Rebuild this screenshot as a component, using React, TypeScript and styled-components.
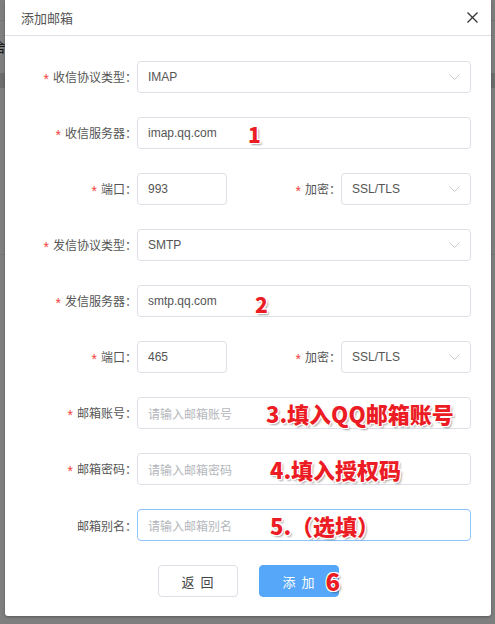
import React, { FC } from 'react'
import styled, { createGlobalStyle } from 'styled-components'

const GlobalStyle = createGlobalStyle`
    html, body {
        margin: 0;
        padding: 0;
        width: 495px;
        height: 624px;
        overflow: hidden;
        font-family: "Liberation Sans", "Noto Sans CJK SC", sans-serif;
    }
`

const Page = styled.div`
    position: relative;
    width: 495px;
    height: 624px;
    background: #fff;
    overflow: hidden;
`

const PageTopBar = styled.div`
    height: 20px;
    border-bottom: 1px solid #e8e8e8;
`

const PageText = styled.div`
    height: 52px;
    font-size: 14px;
    line-height: 52px;
    margin-left: -8px;
    color: #333;
`

const PageBand = styled.div`
    height: 15px;
    background: #dcdcdc;
`

const PageSection = styled.div`
    height: 166px;
    border-bottom: 1px solid #ececec;
`

const Mask = styled.div`
    position: absolute;
    inset: 0;
    background: rgba(0, 0, 0, 0.5);
`

const Dialog = styled.div`
    position: absolute;
    left: 5px;
    top: 0;
    width: 486px;
    height: 616px;
    background: #fff;
    border-radius: 0 0 3px 3px;
    box-shadow: 0 1px 3px rgba(0, 0, 0, 0.3);
    box-sizing: border-box;
`

const Header = styled.div`
    display: flex;
    align-items: center;
    justify-content: space-between;
    height: 36px;
    padding: 0 12px 0 16px;
    border-bottom: 1px solid #dcdfe6;
    box-sizing: border-box;
`

const Title = styled.span`
    font-size: 13px;
    color: #555;
    font-family: "Noto Sans CJK SC", sans-serif;
`

const Close = styled.button`
    border: none;
    background: none;
    padding: 0;
    width: 14px;
    height: 14px;
    display: flex;
    align-items: center;
    justify-content: center;
    cursor: pointer;
`

const Body = styled.div`
    display: flex;
    flex-direction: column;
    gap: 24px;
    padding: 25px 20px 0 12px;
`

const Row = styled.div`
    display: flex;
    align-items: center;
    height: 32px;
`

const Label = styled.label<{ $width: number }>`
    width: ${p => p.$width}px;
    flex-shrink: 0;
    text-align: right;
    font-size: 12px;
    color: #555;
    font-family: "Noto Sans CJK SC", sans-serif;
    white-space: nowrap;
`

const Star = styled.span`
    color: #f03c3c;
    margin-right: 4px;
    font-size: 14px;
    font-family: "Liberation Sans", sans-serif;
    vertical-align: -2px;
`

const Field = styled.div<{ $width?: number; $focus?: boolean }>`
    position: relative;
    display: flex;
    align-items: center;
    box-sizing: border-box;
    height: 32px;
    width: ${p => (p.$width ? `${p.$width}px` : 'auto')};
    flex: ${p => (p.$width ? '0 0 auto' : '1')};
    border: 1px solid ${p => (p.$focus ? '#8cc4fb' : '#dcdfe6')};
    border-radius: 4px;
    padding: 0 10px;
    background: #fff;
`

const Value = styled.span<{ $placeholder?: boolean }>`
    flex: 1;
    font-size: 12px;
    color: ${p => (p.$placeholder ? '#b4b6bb' : '#555')};
    font-family: "Liberation Sans", "Noto Sans CJK SC", sans-serif;
    white-space: nowrap;
`

const Spacer = styled.div`
    flex: 1;
`

const Note = styled.span<{ $left: number; $top?: number; $size?: number }>`
    position: absolute;
    left: ${p => p.$left}px;
    top: ${p => p.$top ?? 0}px;
    font-size: ${p => p.$size ?? 22}px;
    line-height: 30px;
    font-weight: 900;
    color: #ec1c24;
    font-family: "Noto Sans CJK SC", sans-serif;
    white-space: nowrap;
    letter-spacing: 0;
    text-indent: 0;
    text-shadow: 1px 1px 0 #fff, -1px -1px 0 #fff, 1px -1px 0 #fff, -1px 1px 0 #fff,
        0 1px 0 #fff, 1px 0 0 #fff, 2px 2px 2px rgba(0, 0, 0, 0.35);
    pointer-events: none;
`

const Footer = styled.div`
    display: flex;
    justify-content: center;
    gap: 21px;
    padding: 24px 0 0 0;
`

const Button = styled.button<{ $primary?: boolean }>`
    position: relative;
    width: 80px;
    height: 32px;
    border-radius: 4px;
    border: 1px solid ${p => (p.$primary ? '#56a7f9' : '#dcdfe6')};
    background: ${p => (p.$primary ? '#56a7f9' : '#fff')};
    color: ${p => (p.$primary ? '#fff' : '#444')};
    font-size: 13px;
    letter-spacing: 6px;
    text-indent: 6px;
    font-family: "Noto Sans CJK SC", sans-serif;
    cursor: pointer;
    padding: 0;
`

const Arrow: FC = () => (
    <svg width="11" height="6" viewBox="0 0 11 6">
        <path d="M0.5 0.5 L5.5 5.5 L10.5 0.5" fill="none" stroke="#c8cbd1" strokeWidth="1" />
    </svg>
)

const Select: FC<{ value: string; width?: number }> = ({ value, width }) => (
    <Field $width={width}>
        <Value>{value}</Value>
        <Arrow />
    </Field>
)

const App: FC = () => {
    return (
        <>
            <GlobalStyle />
            <Page>
                <PageTopBar />
                <PageText>舍</PageText>
                <PageBand />
                <PageSection />
                <Mask />
                <Dialog>
                    <Header>
                        <Title>添加邮箱</Title>
                        <Close>
                            <svg width="11" height="11" viewBox="0 0 11 11">
                                <path d="M0.5 0.5 L10.5 10.5 M10.5 0.5 L0.5 10.5" stroke="#333" strokeWidth="1.3" />
                            </svg>
                        </Close>
                    </Header>
                    <Body>
                        <Row>
                            <Label $width={120}><Star>*</Star>收信协议类型：</Label>
                            <Select value="IMAP" />
                        </Row>
                        <Row>
                            <Label $width={120}><Star>*</Star>收信服务器：</Label>
                            <Field>
                                <Value>imap.qq.com</Value>
                                <Note $left={110} $top={1} $size={21}>1</Note>
                            </Field>
                        </Row>
                        <Row>
                            <Label $width={120}><Star>*</Star>端口：</Label>
                            <Field $width={90}>
                                <Value>993</Value>
                            </Field>
                            <Spacer />
                            <Label $width={114}><Star>*</Star>加密：</Label>
                            <Select value="SSL/TLS" width={130} />
                        </Row>
                        <Row>
                            <Label $width={120}><Star>*</Star>发信协议类型：</Label>
                            <Select value="SMTP" />
                        </Row>
                        <Row>
                            <Label $width={120}><Star>*</Star>发信服务器：</Label>
                            <Field>
                                <Value>smtp.qq.com</Value>
                                <Note $left={117} $top={3} $size={21}>2</Note>
                            </Field>
                        </Row>
                        <Row>
                            <Label $width={120}><Star>*</Star>端口：</Label>
                            <Field $width={90}>
                                <Value>465</Value>
                            </Field>
                            <Spacer />
                            <Label $width={114}><Star>*</Star>加密：</Label>
                            <Select value="SSL/TLS" width={130} />
                        </Row>
                        <Row>
                            <Label $width={120}><Star>*</Star>邮箱账号：</Label>
                            <Field>
                                <Value $placeholder>请输入邮箱账号</Value>
                                <Note $left={128}>3.填入QQ邮箱账号</Note>
                            </Field>
                        </Row>
                        <Row>
                            <Label $width={120}><Star>*</Star>邮箱密码：</Label>
                            <Field>
                                <Value $placeholder>请输入邮箱密码</Value>
                                <Note $left={132}>4.填入授权码</Note>
                            </Field>
                        </Row>
                        <Row>
                            <Label $width={120}>邮箱别名：</Label>
                            <Field $focus>
                                <Value $placeholder>请输入邮箱别名</Value>
                                <Note $left={132}>5.（选填）</Note>
                            </Field>
                        </Row>
                    </Body>
                    <Footer>
                        <Button>返回</Button>
                        <Button $primary>
                            添加
                            <Note $left={66} $top={0} $size={24}>6</Note>
                        </Button>
                    </Footer>
                </Dialog>
            </Page>
        </>
    )
}

export default App
